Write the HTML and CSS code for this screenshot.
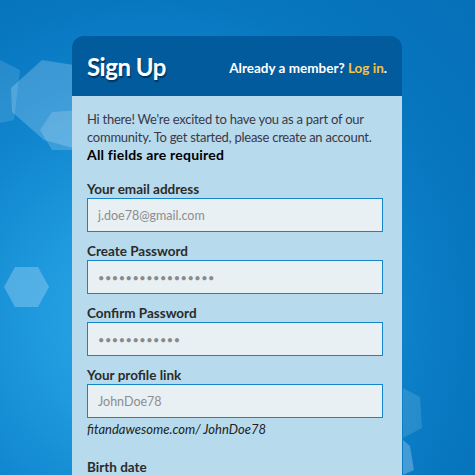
FILE: index.html
```html
<!DOCTYPE html>
<html>
<head>
<meta charset="utf-8">
<link rel="stylesheet" href="styles.css">
</head>
<body>
<svg class="bg-shapes" width="475" height="475" viewBox="0 0 475 475">
  <g fill="#cfe8fb">
    <polygon points="-10,55 20,70 14,120 -10,125" opacity="0.15"/>
    <polygon points="42,60 80,66 80,150 44,140 12,112 11,88" opacity="0.25"/>
    <polygon points="52,112 80,110 80,150 52,150 40,130" opacity="0.22"/>
    <polygon points="15,267 38,267 49,287 38,307 15,307 4,287" opacity="0.3"/>
    <polygon points="403,388 420,397 422,428 403,438" opacity="0.15"/>
    <polygon points="403,440 410,446 414,470 403,475" opacity="0.3"/>
  </g>
</svg>
<div class="card">
  <div class="card-head">
    <h1 class="title">Sign Up</h1>
    <p class="member">Already a member? <a class="login" href="#">Log in</a>.</p>
  </div>
  <div class="card-body">
    <p class="intro">Hi there! We're excited to have you as a part of our community. To get started, please create an account. <strong>All fields are required</strong></p>
    <label class="label first">Your email address</label>
    <div class="input">j.doe78@gmail.com</div>
    <label class="label">Create Password</label>
    <div class="input dots">&#8226;&#8226;&#8226;&#8226;&#8226;&#8226;&#8226;&#8226;&#8226;&#8226;&#8226;&#8226;&#8226;&#8226;&#8226;&#8226;&#8226;</div>
    <label class="label">Confirm Password</label>
    <div class="input dots">&#8226;&#8226;&#8226;&#8226;&#8226;&#8226;&#8226;&#8226;&#8226;&#8226;&#8226;&#8226;</div>
    <label class="label">Your profile link</label>
    <div class="input">JohnDoe78</div>
    <p class="hint">fitandawesome.com/ JohnDoe78</p>
    <label class="label birth">Birth date</label>
  </div>
</div>
</body>
</html>
```
FILE: styles.css
```css
html, body {
  margin: 0;
  padding: 0;
  height: 475px;
  overflow: hidden;
}
body {
  position: relative;
  font-family: "Lato", "Open Sans", sans-serif;
  background: radial-gradient(circle at 150px 320px, #2aa9e9 0%, #1f9ade 25%, #1288d0 45%, #0777c0 70%, #066fb8 100%);
}
.bg-shapes {
  position: absolute;
  left: 0;
  top: 0;
}
.card {
  position: relative;
  margin: 36px 0 0 72px;
  width: 330px;
}
.card-head {
  background: #025b9c;
  border-radius: 12px 12px 0 0;
  height: 60px;
  padding: 0 15px;
  display: flex;
  align-items: center;
  justify-content: space-between;
}
.title {
  margin: 0;
  color: #fff;
  font-size: 24px;
  font-weight: 700;
  letter-spacing: -0.5px;
  text-shadow: 1px 2px 1px rgba(0, 20, 50, 0.55);
}
.member {
  margin: 3px 0 0;
  color: #fff;
  font-size: 13.5px;
  font-weight: 700;
}
.login {
  color: #f6c443;
  text-decoration: none;
}
.card-body {
  box-sizing: border-box;
  background: #b7daed;
  padding: 14px 19px 0 15px;
  height: 379px;
}
.intro {
  margin: 0;
  font-size: 13px;
  letter-spacing: -0.25px;
  line-height: 18px;
  color: #3b3846;
}
.intro strong {
  display: block;
  color: #000;
  font-size: 14px;
  letter-spacing: 0.2px;
}
.label {
  display: block;
  margin-top: 10px;
  font-size: 13.5px;
  line-height: 18px;
  font-weight: 700;
  color: #2b2b2b;
}
.label.first {
  margin-top: 16px;
}
.label.birth {
  margin-top: 20px;
}
.input {
  box-sizing: border-box;
  height: 34px;
  border: 1px solid #1584c9;
  background: #e8f0f4;
  padding: 0 10px;
  display: flex;
  align-items: center;
  font-size: 12.5px;
  color: #8d8d8d;
}
.input.dots {
  font-size: 11px;
  letter-spacing: 0.5px;
  color: #8a8a8a;
}
.hint {
  margin: 2px 0 0;
  font-size: 13px;
  line-height: 18px;
  font-style: italic;
  color: #222;
}
```
